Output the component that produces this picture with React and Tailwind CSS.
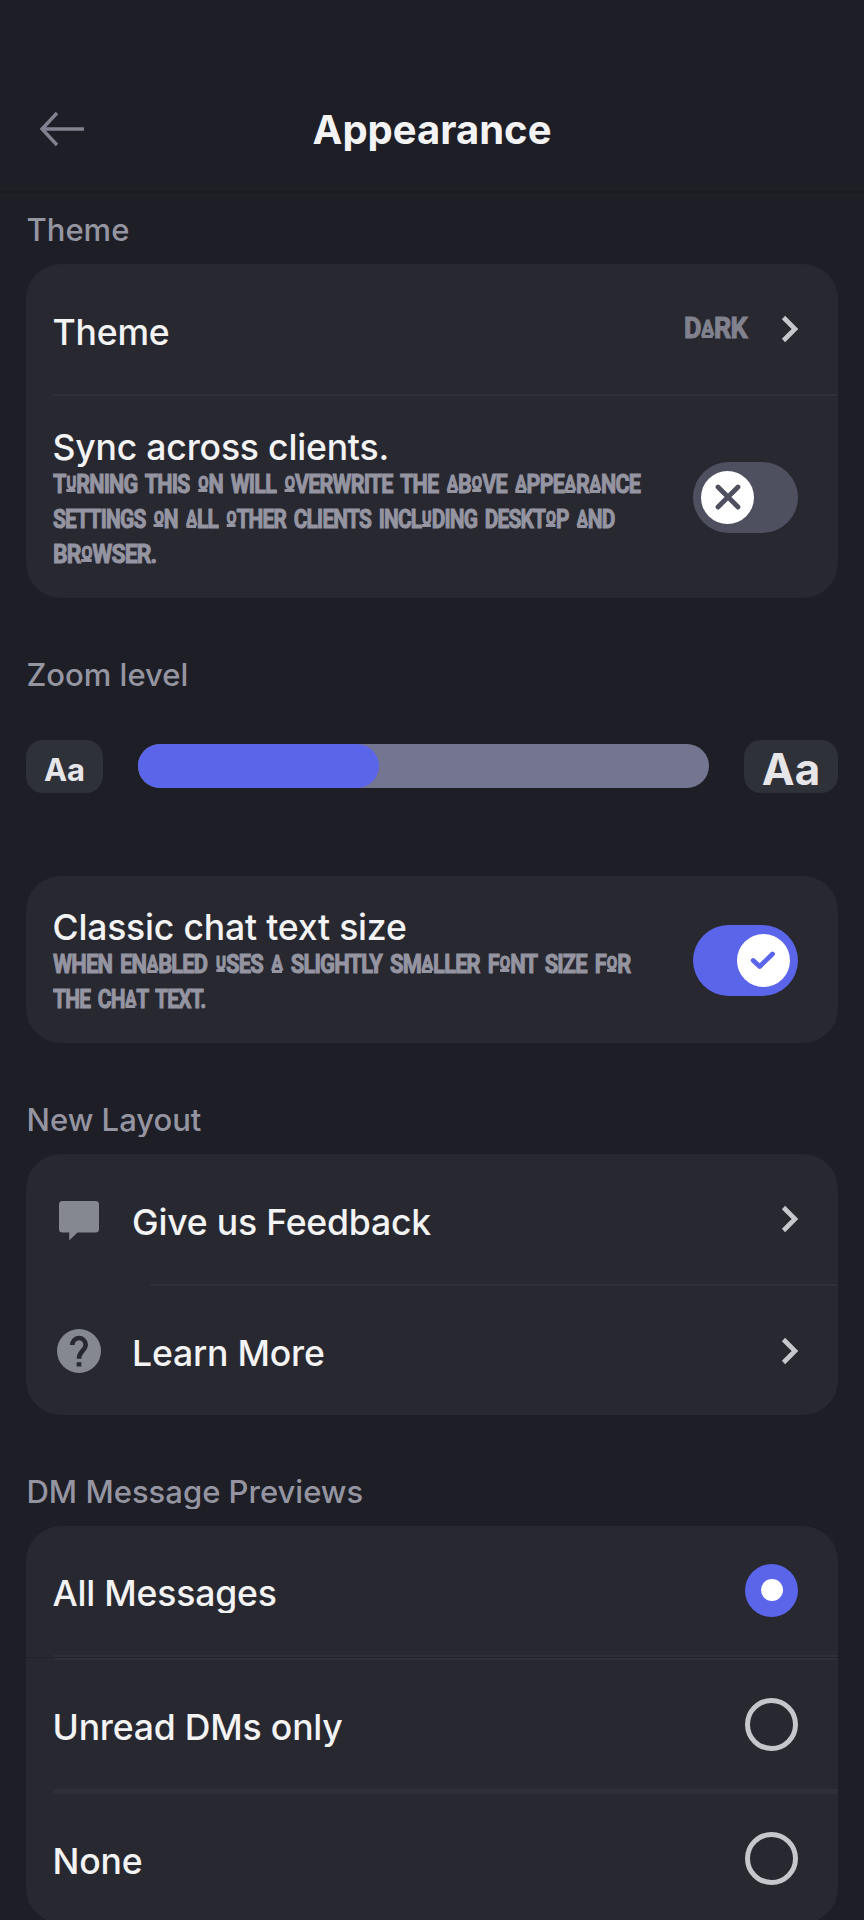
import React from "react";

const smallCaps = {
  O: "inline-block border-b-[3px] border-current text-[18px] leading-[13px] align-[4px] mx-px",
  U: "inline-block border-b-[3px] border-current text-[18px] leading-[13px] align-[4px] mx-px",
  A: "inline-block border-b-[3px] border-current text-[20px] leading-[14px] align-[3px] mx-px",
};

/* Poster lettering: O, U and A are reduced and sit on a short bar. */
function Lettering({ text }) {
  return text.split(/([OUA])/).map((part, i) =>
    smallCaps[part] ? (
      <span key={i} className={smallCaps[part]}>
        {part}
      </span>
    ) : (
      part
    )
  );
}

function Line({ text, className }) {
  return (
    <span
      className={
        "block h-[35.3px] w-max origin-left whitespace-pre leading-[35px] tracking-[-1px] [word-spacing:4px] [-webkit-text-stroke:1px_currentColor] " +
        className
      }
    >
      <Lettering text={text} />
    </span>
  );
}

/* Text boxes are short enough to trim the tails of g, p and y. */
const trim = (text) => (/[gpy]/.test(text) ? "overflow-hidden " : "");

function Label({ children, className = "mt-[60px]" }) {
  return (
    <h2
      className={
        trim(children) + "mb-[17px] h-[34px] pl-[0.5px] text-[31px] font-medium leading-[34px] text-[#9595a2] " + className
      }
    >
      {children}
    </h2>
  );
}

function Card({ children, className = "" }) {
  return <section className={"overflow-hidden rounded-[35px] bg-[#282831] " + className}>{children}</section>;
}

function RowTitle({ children }) {
  return (
    <div className={trim(children) + "text-[35.6px] font-medium leading-[39px] tracking-[-0.2px] text-[#f3f3f4]"}>
      {children}
    </div>
  );
}

function Chevron() {
  return (
    <svg width="18" height="28" viewBox="0 0 18 28" fill="none" className="block">
      <path d="M2.5 2.5 L14 14 L2.5 25.5" stroke="#c6c6cd" strokeWidth="4.6" />
    </svg>
  );
}

function Toggle({ on }) {
  return (
    <div
      className={
        "flex h-[71px] w-[105.5px] shrink-0 items-center rounded-full px-[8.5px] " +
        (on ? "justify-end bg-[#5b65ea]" : "justify-start bg-[#4e4f5f]")
      }
    >
      <div className="flex size-[53px] items-center justify-center rounded-full bg-white">
        {on ? (
          <svg width="26" height="20" viewBox="0 0 26 20" fill="none">
            <path d="M3.2 10.5 L9.7 16.5 L22.5 4" stroke="#5b65ea" strokeWidth="4.8" strokeLinecap="round" strokeLinejoin="round" />
          </svg>
        ) : (
          <svg width="26" height="26" viewBox="0 0 26 26" fill="none">
            <path d="M3 3 L23 23 M23 3 L3 23" stroke="#4e4f5f" strokeWidth="4.8" strokeLinecap="round" />
          </svg>
        )}
      </div>
    </div>
  );
}

function LinkRow({ icon, title }) {
  return (
    <div className="flex h-[129.25px] items-center pl-[26.5px] pr-[39px]">
      <div className="flex w-[53px] justify-center">{icon}</div>
      <div className="flex-1 pl-[26.5px] pt-[6px]">
        <RowTitle>{title}</RowTitle>
      </div>
      <Chevron />
    </div>
  );
}

function RadioRow({ title, checked }) {
  return (
    <div className="flex h-[129px] items-center justify-between pl-[26.5px] pr-[40px]">
      <div className="pt-[6px]">
        <RowTitle>{title}</RowTitle>
      </div>
      {checked ? (
        <div className="flex size-[53px] items-center justify-center rounded-full bg-[#5b65ea]">
          <div className="size-[22px] rounded-full bg-white" />
        </div>
      ) : (
        <div className="size-[53px] rounded-full border-[5px] border-[#c6c6cd]" />
      )}
    </div>
  );
}

export default function App() {
  return (
    <main className="h-[1920px] w-[864px] overflow-hidden bg-[#1e1e26] font-['Inter',sans-serif]">
      <header className="grid h-[193px] grid-cols-[1fr_auto_1fr] items-center border-b-2 border-[#1b1b22] pb-[2px] pt-[68px]">
        <svg width="46" height="36" viewBox="0 0 46 36" fill="none" className="ml-[39px]">
          <path d="M45 18 H3 M18 2 L3 18 L18 34" stroke="#82818f" strokeWidth="3.4" />
        </svg>
        <h1 className="mt-px overflow-hidden text-[40px] font-bold leading-[43px] text-[#f3f3f4]">Appearance</h1>
        <span />
      </header>

      <div className="px-[26px]">
        <Label className="mt-[20px]">Theme</Label>
        <Card>
          <div className="flex h-[129.5px] items-center pl-[26.5px] pr-[39px]">
            <div className="flex-1 pt-[7px]">
              <RowTitle>Theme</RowTitle>
            </div>
            <div className="w-[64px] font-['Roboto',sans-serif] text-[29px] font-bold text-[#82828e]">
              <Line text="DARK" className="scale-x-[0.93]" />
            </div>
            <div className="ml-[33px]">
              <Chevron />
            </div>
          </div>
          <div className="ml-[27px] h-[2.5px] bg-[#2f2f3a]" />
          <div className="flex items-center justify-between pb-[26px] pl-[26.5px] pr-[40px]">
            <div className="pt-[31.5px]">
              <RowTitle>Sync across clients.</RowTitle>
              <p className="w-[590px] font-['Roboto',sans-serif] text-[26px] font-bold text-[#9595a2]">
                <Line text="TURNING THIS ON WILL OVERWRITE THE ABOVE APPEARANCE" className="scale-x-[0.83]" />
                <Line text="SETTINGS ON ALL OTHER CLIENTS INCLUDING DESKTOP AND" className="scale-x-[0.804]" />
                <Line text="BROWSER." className="scale-x-[0.88]" />
              </p>
            </div>
            <div className="pt-[26px]">
              <Toggle />
            </div>
          </div>
        </Card>

        <Label>Zoom level</Label>
        <div className="mb-[83px] mt-[48px] flex h-[53px] items-center">
          <div className="flex h-[53px] w-[77px] items-center justify-center rounded-[17px] bg-[#2f3139] pt-[5px] text-[31px] font-bold leading-none text-[#e6e6e9]">
            Aa
          </div>
          <div className="mb-px ml-[35px] mr-[35px] h-[44px] flex-1 rounded-full bg-[#747590]">
            <div className="h-full w-[241px] rounded-full bg-[#5b65ea]" />
          </div>
          <div className="flex h-[53px] w-[94px] items-center justify-center rounded-[17px] bg-[#2f3139] pt-[5px] text-[44px] font-bold leading-none text-[#e6e6e9]">
            Aa
          </div>
        </div>

        <Card>
          <div className="flex items-center justify-between pb-[26px] pl-[26.5px] pr-[40px]">
            <div className="pt-[31.5px]">
              <RowTitle>Classic chat text size</RowTitle>
              <p className="w-[590px] font-['Roboto',sans-serif] text-[26px] font-bold text-[#9595a2]">
                <Line text="WHEN ENABLED USES A SLIGHTLY SMALLER FONT SIZE FOR" className="scale-x-[0.842]" />
                <Line text="THE CHAT TEXT." className="scale-x-[0.806]" />
              </p>
            </div>
            <div className="pt-[27px]">
              <Toggle on />
            </div>
          </div>
        </Card>

        <Label>New Layout</Label>
        <Card>
          <LinkRow
            title="Give us Feedback"
            icon={
              <svg width="40" height="40" viewBox="0 0 40 40" fill="#868890" className="mt-[3px]">
                <path d="M3.5 0 H36.500 A3.500 3.500 0 0 1 40 3.500 V28 A3.500 3.500 0 0 1 36.500 31.500 H18.500 L10.200 39.500 V31.500 H3.500 A3.500 3.500 0 0 1 0 28 V3.500 A3.500 3.500 0 0 1 3.500 0 Z" />
              </svg>
            }
          />
          <div className="ml-[123.5px] h-[2.5px] bg-[#2f2f3a]" />
          <LinkRow
            title="Learn More"
            icon={
              <svg width="44" height="44" viewBox="0 0 44 44" fill="none">
                <circle cx="22" cy="22" r="22" fill="#868890" />
                <path d="M15.3 16 A6.700 6.700 0 0 1 28.7 15.5 C28.7 21.500 22 22 22 29.800" stroke="#282831" strokeWidth="4.600" />
                <rect x="19.700" y="33.200" width="4.600" height="4.300" fill="#282831" />
              </svg>
            }
          />
        </Card>

        <Label className="mt-[59.5px]">DM Message Previews</Label>
        <Card>
          <RadioRow title="All Messages" checked />
          <div className="ml-[27px] h-[2px] bg-[#2f2f3a]" />
          <div className="h-px bg-[#22222a]" />
          <div className="ml-[27px] h-[2px] bg-[#2f2f3a]" />
          <RadioRow title="Unread DMs only" />
          <div className="ml-[27px] h-[5px] bg-[#2f2f3a]" />
          <RadioRow title="None" />
        </Card>
      </div>
    </main>
  );
}
